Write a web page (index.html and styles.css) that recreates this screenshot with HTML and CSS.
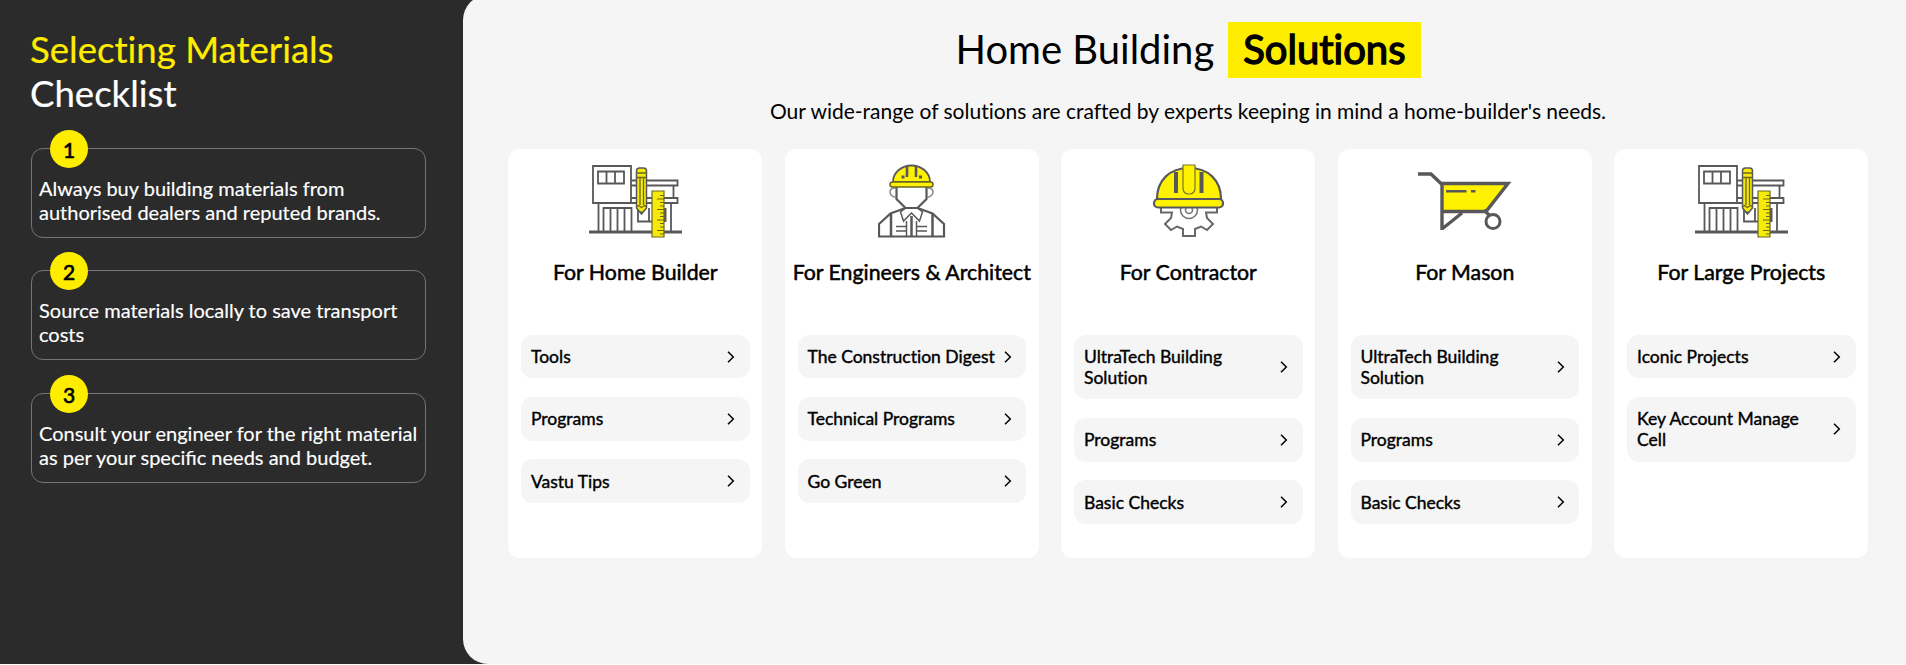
FILE: index.html
```html
<!DOCTYPE html>
<html lang="en">
<head>
<meta charset="utf-8">
<title>Home Building Solutions</title>
<link rel="stylesheet" href="styles.css">
</head>
<body>
<svg class="defs" width="0" height="0" aria-hidden="true">
  <symbol id="house" viewBox="0 0 94 74">
    <g fill="none" stroke="#58585a" stroke-width="1.8">
      <path d="M4 2h38v37H4z"/><path d="M9 7.500h26v12H9zM17.500 7.500v12M26 7.500v12"/>
      <path d="M42 16.500h46.500v5H42M42 34h46.500v5H42M84.500 21.500V34M82 39v28M9.500 39v28M14.500 67V44h28v23M21.500 44v23M28.500 44v23M35.500 44v23M49 44v13.500h14M60 44v13"/>
    </g>
    <path d="M0 66.500h93v3H0z" fill="#58585a"/><path d="M74 44h3.500v14H74z" fill="#58585a"/>
    <path d="M47.500 7q0-3 3-3h4q3 0 3 3v37l-5 6-5-6z" fill="#f6ea0a" stroke="#58585a" stroke-width="1.500"/>
    <path d="M47.500 9h10M47.500 13.500h10M51 14v27M54.500 14v27M47.500 43l2-1.500 3 2 3-2 2 1.500" fill="none" stroke="#6a6720" stroke-width="1.300"/>
    <path d="M50.500 47.500h4l-2 2.500z" fill="#58585a"/>
    <path d="M63 27h12v46H63z" fill="#f6ea0a" stroke="#6a6720" stroke-width="1.200"/>
    <path d="M75 31.500h-4M75 35h-7M75 38.500h-4M75 42h-4M75 45.500h-7M75 49h-4M75 52.500h-4M75 56h-7M75 59.500h-4M75 63h-4M75 66.500h-7M75 70h-4" stroke="#6a6720" stroke-width="1.200"/>
  </symbol>
  <symbol id="engineer" viewBox="0 0 68 74">
    <g fill="none" stroke="#58585a" stroke-width="2.200">
      <path d="M18.500 23v12l9 9h12l9-9V23"/>
      <path d="M18 24h-2.500q-3.500 1-3.500 4 0 4 6 5.500M49 24h2.500q3.500 1 3.500 4 0 4-6 5.500" stroke-width="1.500" stroke="#88888a"/>
      <path d="M27.500 44 12.500 49.500 1 60v12.500h65V60L54.500 49.500 39.500 44"/>
      <path d="M13 50v22M54.500 50v22M33.500 52v20" stroke-width="2.500"/>
      <path d="m27.500 44-5 4 3 9 8-8 8 8 3-9-5-4M38.500 57v15M28.500 57v15M18 62.500h10M18 67h10M39 62.500h10M39 67h10" stroke-width="1.500"/>
    </g>
    <path d="M15 18C15 8 24 1.500 33.500 1.500S52 8 52 18z" fill="#fff200" stroke="#58585a" stroke-width="1.800"/>
    <rect x="12" y="18" width="43" height="5" rx="2.500" fill="#fff200" stroke="#6a6720" stroke-width="1.500"/>
    <path d="M29 2v11M38 2v11" stroke="#58585a" stroke-width="2.600"/><path d="M23.500 11.500h3v3h-3zM41 11.500h3v3h-3z" fill="#58585a"/>
  </symbol>
  <symbol id="helmet" viewBox="0 0 74 74">
    <path d="M9 43.500v5H20L19 54l-6 6 6 6 6-3.500 6 2.500v7h12v-7l6-2.500 6 3.500 6-6-6-6-1-5.500h11v-5" fill="none" stroke="#68686a" stroke-width="2"/>
    <circle cx="37" cy="46" r="8.500" fill="none" stroke="#77777a" stroke-width="1.600"/><circle cx="37" cy="46" r="3.500" fill="none" stroke="#77777a" stroke-width="1.600"/>
    <path d="M5 35C5 16 18 4 37 4s32 12 32 31z" fill="#fff200" stroke="#58585a" stroke-width="2.200"/>
    <path d="M24 8v21M49.500 8v21" stroke="#58585a" stroke-width="4"/>
    <path d="M31 1h12v23q0 6-6 6t-6-6z" fill="#fff200" stroke="#77742a" stroke-width="1.200"/>
    <rect x="2" y="35" width="69" height="8.500" rx="4" fill="#fff200" stroke="#58585a" stroke-width="2.200"/>
  </symbol>
  <symbol id="barrow" viewBox="0 0 94 62">
    <path d="M25 14h64L67 40H25z" fill="#fff200"/>
    <g fill="none" stroke="#58585a" stroke-width="3.400">
      <path d="M0 3h13l10 9.500h67L68 40.500H24M24 11v48M24 58l20-16M66 39l6 6"/><circle cx="75" cy="50.500" r="7" stroke-width="3"/>
      <path d="M28 20.200h20.500M53 20.200h4.500" stroke-width="2.400"/>
    </g>
  </symbol>
  <symbol id="chevron" viewBox="0 0 8 12"><path d="m1 .7 5.300 5.300L1 11.300" fill="none" stroke="#000" stroke-width="1.500"/></symbol>
</svg>
<div class="page">
  <aside class="checklist">
    <h2 class="checklist-title"><span class="accent">Selecting Materials</span><br>Checklist</h2>
    <ol class="steps">
      <li class="step"><span class="step-number">1</span>Always buy building materials from authorised dealers and reputed brands.</li>
      <li class="step"><span class="step-number">2</span>Source materials locally to save transport costs</li>
      <li class="step"><span class="step-number">3</span>Consult your engineer for the right material as per your specific needs and budget.</li>
    </ol>
  </aside>
  <main class="solutions">
    <h1 class="title"><span>Home Building</span><span class="highlight">Solutions</span></h1>
    <p class="subtitle">Our wide-range of solutions are crafted by experts keeping in mind a home-builder's needs.</p>
    <div class="cards">
      <section class="card">
        <svg class="icon house"><use href="#house"/></svg>
        <h3 class="card-title">For Home Builder</h3>
        <a class="link"><span>Tools</span><svg class="chevron"><use href="#chevron"/></svg></a>
        <a class="link"><span>Programs</span><svg class="chevron"><use href="#chevron"/></svg></a>
        <a class="link"><span>Vastu Tips</span><svg class="chevron"><use href="#chevron"/></svg></a>
      </section>
      <section class="card">
        <svg class="icon engineer"><use href="#engineer"/></svg>
        <h3 class="card-title">For Engineers &amp; Architect</h3>
        <a class="link"><span>The Construction Digest</span><svg class="chevron"><use href="#chevron"/></svg></a>
        <a class="link"><span>Technical Programs</span><svg class="chevron"><use href="#chevron"/></svg></a>
        <a class="link"><span>Go Green</span><svg class="chevron"><use href="#chevron"/></svg></a>
      </section>
      <section class="card">
        <svg class="icon helmet"><use href="#helmet"/></svg>
        <h3 class="card-title">For Contractor</h3>
        <a class="link"><span>UltraTech Building<br>Solution</span><svg class="chevron"><use href="#chevron"/></svg></a>
        <a class="link"><span>Programs</span><svg class="chevron"><use href="#chevron"/></svg></a>
        <a class="link"><span>Basic Checks</span><svg class="chevron"><use href="#chevron"/></svg></a>
      </section>
      <section class="card">
        <svg class="icon barrow"><use href="#barrow"/></svg>
        <h3 class="card-title">For Mason</h3>
        <a class="link"><span>UltraTech Building<br>Solution</span><svg class="chevron"><use href="#chevron"/></svg></a>
        <a class="link"><span>Programs</span><svg class="chevron"><use href="#chevron"/></svg></a>
        <a class="link"><span>Basic Checks</span><svg class="chevron"><use href="#chevron"/></svg></a>
      </section>
      <section class="card">
        <svg class="icon house"><use href="#house"/></svg>
        <h3 class="card-title">For Large Projects</h3>
        <a class="link"><span>Iconic Projects</span><svg class="chevron"><use href="#chevron"/></svg></a>
        <a class="link"><span>Key Account Manage<br>Cell</span><svg class="chevron"><use href="#chevron"/></svg></a>
      </section>
    </div>
  </main>
</div>
</body>
</html>
```
FILE: styles.css
```css
* { box-sizing: border-box; }
body { margin: 0; font-family: Lato, "Liberation Sans", sans-serif; font-variant-ligatures: none; color: #000; background: #fff; overflow: hidden; }
h1, h2, h3, p, ol { margin: 0; padding: 0; font-weight: 400; }
.defs { display: none; }
.page { display: flex; height: 664px; background: #2b2b2b; overflow: hidden; }
.checklist { width: 463px; flex: none; padding: 27px 37px 0 31px; color: #fff; }
.checklist-title { margin-left: -1px; font-size: 36.6px; line-height: 44px; -webkit-text-stroke: .2px currentColor; }
.accent { color: #ffed00; }
.steps { list-style: none; display: flex; flex-direction: column; gap: 32.4px; margin-top: 33px; }
.step { position: relative; height: 90px; border: 1px solid #757575; border-radius: 12px; padding: 27px 0 0 7px; font-size: 20px; line-height: 24px; font-variant-ligatures: normal; -webkit-text-stroke: .15px currentColor; }
.step-number { position: absolute; left: 18px; top: -19px; width: 38px; height: 38px; border-radius: 50%; background: #ffed00; color: #000; font-size: 21px; font-weight: 400; line-height: 39px; text-align: center; -webkit-text-stroke: .7px #000; }
.solutions { flex: 1; margin-top: -5px; height: 669px; padding: 27px 38px 0 45px; border-radius: 25px 0 0 25px; background: #f5f5f5; }
.title { display: flex; justify-content: center; gap: 14px; font-size: 40px; line-height: 54px; height: 56px; }
.highlight { height: 56px; padding: 0 15px; background: #ffed00; -webkit-text-stroke: 1.4px #000; }
.subtitle { margin-top: 20px; font-size: 21px; line-height: 26px; text-align: center; }
.cards { display: grid; grid-template-columns: repeat(5, 254px); justify-content: space-between; margin-top: 25px; height: 409px; }
.card { display: flex; flex-direction: column; align-items: center; background: #fff; border-radius: 12px; padding: 15px 12.5px 0 13px; }
.icon { flex: none; }
.icon.house { width: 94px; height: 74px; margin-left: 1px; }
.icon.engineer { width: 68px; height: 74px; }
.icon.helmet { width: 74px; height: 74px; margin-left: 1px; }
.icon.barrow { width: 94px; height: 62px; margin: 7px 0 5px; }
.card-title { margin: 21px -13px 49px; font-size: 21.3px; line-height: 27px; height: 27px; white-space: nowrap; -webkit-text-stroke: .5px #000; }
.link { align-self: stretch; display: flex; align-items: center; justify-content: space-between; margin-bottom: 18.8px; padding: 11.2px 14.5px 11.2px 10px; border-radius: 12px; background: #f5f5f5; font-size: 17.5px; line-height: 21px; white-space: nowrap; -webkit-text-stroke: .4px #000; }
.chevron { flex: none; width: 8px; height: 12px; }
```
